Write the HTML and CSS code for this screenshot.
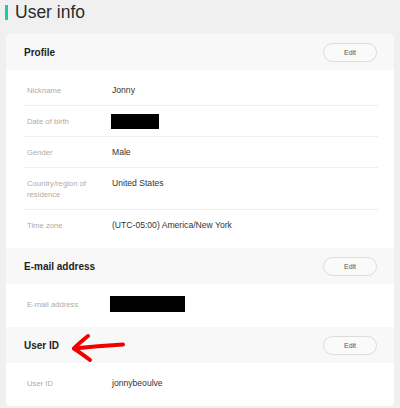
FILE: index.html
```html
<!DOCTYPE html>
<html lang="en">
<head>
<meta charset="utf-8">
<title>User info</title>
<link rel="stylesheet" href="styles.css">
</head>
<body>
<div class="page">
  <h1 class="title">User info</h1>
  <div class="card">
    <section class="sec">
      <div class="sec-head">
        <h2>Profile</h2>
        <button class="edit" type="button">Edit</button>
      </div>
      <dl class="rows">
        <div class="row"><dt>Nickname</dt><dd>Jonny</dd></div>
        <div class="row"><dt>Date of birth</dt><dd><span class="redact redact-dob"></span></dd></div>
        <div class="row"><dt>Gender</dt><dd>Male</dd></div>
        <div class="row"><dt>Country/region of residence</dt><dd>United States</dd></div>
        <div class="row"><dt>Time zone</dt><dd>(UTC-05:00) America/New York</dd></div>
      </dl>
    </section>
    <section class="sec">
      <div class="sec-head">
        <h2>E-mail address</h2>
        <button class="edit" type="button">Edit</button>
      </div>
      <dl class="rows">
        <div class="row"><dt>E-mail address</dt><dd><span class="redact redact-mail"></span></dd></div>
      </dl>
    </section>
    <section class="sec">
      <div class="sec-head">
        <h2>User ID</h2>
        <button class="edit" type="button">Edit</button>
        <svg class="arrow" width="60" height="32" viewBox="0 0 60 32" aria-hidden="true">
          <path d="M6 16.5 C20 15 38 13.5 55 12.5" fill="none" stroke="#f20000" stroke-width="4" stroke-linecap="round"/>
          <path d="M20 4 C15 8 10 12 6 16.5 C11 20 17 24 22 28" fill="none" stroke="#f20000" stroke-width="4" stroke-linecap="round" stroke-linejoin="round"/>
        </svg>
      </div>
      <dl class="rows">
        <div class="row"><dt>User ID</dt><dd>jonnybeoulve</dd></div>
      </dl>
    </section>
  </div>
</div>
</body>
</html>
```
FILE: styles.css
```css
* { box-sizing: border-box; }

html, body {
  margin: 0;
  padding: 0;
  background: #f0f0f0;
  font-family: "Liberation Sans", Arial, sans-serif;
  color: #333;
}

.page {
  padding: 2px 6px 0 6px;
}

.title {
  margin: 0 0 12px -1px;
  font-size: 17.5px;
  line-height: 20px;
  font-weight: normal;
  color: #2a2a2a;
  display: flex;
  align-items: center;
  gap: 7px;
}

.title::before {
  content: "";
  display: block;
  width: 3px;
  height: 15px;
  margin-top: 1px;
  background: #1ecba8;
}

.card {
  background: #fff;
  border-radius: 4px;
  overflow: hidden;
  width: 388px;
}

.sec-head {
  position: relative;
  display: flex;
  align-items: center;
  justify-content: space-between;
  height: 36px;
  padding: 0 17px 0 18px;
  background: #f8f8f8;
}

.sec-head h2 {
  margin: 0;
  font-size: 10px;
  font-weight: bold;
  color: #222;
}

.edit {
  width: 54px;
  height: 19px;
  margin-top: 1px;
  padding: 0;
  border: 1px solid #dcdcdc;
  border-radius: 10px;
  background: #fafafa;
  font-family: "Liberation Sans", Arial, sans-serif;
  font-size: 7px;
  color: #555;
}

.arrow {
  position: absolute;
  left: 62px;
  top: 5px;
}

.rows {
  margin: 0 16px 0 18px;
  padding: 5px 0 8px;
}

.row {
  display: flex;
  align-items: flex-start;
  padding: 9.5px 3px;
  border-bottom: 1px solid #efefef;
  line-height: 11px;
}

.row:last-child {
  border-bottom: none;
}

.row dt {
  flex: 0 0 85px;
  padding-right: 12px;
  font-size: 7.7px;
  color: #b0aaa8;
}

.row dd {
  margin: 0;
  font-size: 8.6px;
  color: #333;
}

.redact {
  display: inline-block;
  background: #000;
  vertical-align: middle;
  margin-left: -1px;
}

.redact-dob {
  width: 48px;
  height: 15px;
  margin-top: -3px;
  margin-bottom: -3px;
}

.redact-mail {
  width: 75px;
  height: 16px;
  margin-top: -3px;
  margin-bottom: -3px;
  margin-left: -2px;
}
```
